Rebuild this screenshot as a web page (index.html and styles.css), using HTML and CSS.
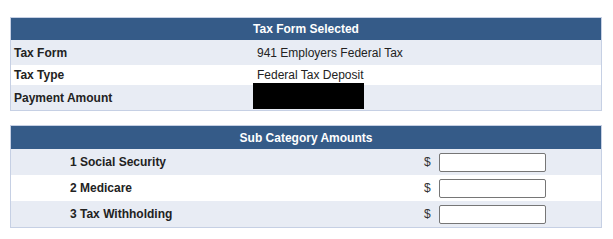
FILE: index.html
```html
<!DOCTYPE html>
<html lang="en">
<head>
    <meta charset="UTF-8">
    <title>Tax Form Selected</title>
    <link rel="stylesheet" href="styles.css">
</head>
<body>
<div class="main">
    <table class="grid summary">
        <colgroup>
            <col class="c-label">
            <col>
        </colgroup>
        <tr class="head">
            <th colspan="2">Tax Form Selected</th>
        </tr>
        <tr class="alt tall">
            <td class="label">Tax Form</td>
            <td class="value">941 Employers Federal Tax</td>
        </tr>
        <tr class="short">
            <td class="label">Tax Type</td>
            <td class="value">Federal Tax Deposit</td>
        </tr>
        <tr class="alt tall">
            <td class="label">Payment Amount</td>
            <td class="value"><div class="redact"></div></td>
        </tr>
    </table>

    <table class="grid amounts">
        <colgroup>
            <col class="c-sub">
            <col class="c-dollar">
            <col>
        </colgroup>
        <tr class="head">
            <th colspan="3">Sub Category Amounts</th>
        </tr>
        <tr class="alt">
            <td class="label sub">1 Social Security</td>
            <td class="dollar">$</td>
            <td class="entry"><input type="text" class="amount"></td>
        </tr>
        <tr>
            <td class="label sub">2 Medicare</td>
            <td class="dollar">$</td>
            <td class="entry"><input type="text" class="amount"></td>
        </tr>
        <tr class="alt">
            <td class="label sub">3 Tax Withholding</td>
            <td class="dollar">$</td>
            <td class="entry"><input type="text" class="amount"></td>
        </tr>
    </table>
</div>
</body>
</html>
```

FILE: styles.css
```css
html, body {
    margin: 0;
    padding: 0;
    background: #fff;
}

.main {
    padding: 17px 0 0 10px;
    font-family: "Liberation Sans", Arial, sans-serif;
    font-size: 12px;
    color: #222;
}

.grid {
    width: 592px;
    border: 1px solid #c6d0e4;
    border-collapse: separate;
    border-spacing: 0;
    table-layout: fixed;
}

.grid td, .grid th {
    padding: 0;
    white-space: nowrap;
}

.c-label { width: 242px; }
.c-sub { width: 410px; }
.c-dollar { width: 14px; }

.head th {
    background-color: #355b88;
    color: #fff;
    font-weight: bold;
    text-align: center;
    height: 22px;
}

.amounts .head th {
    height: 23px;
}

.alt td {
    background-color: #e8ecf4;
}

.summary .tall td {
    height: 25px;
}

.summary .short td {
    height: 20px;
}

.label {
    font-weight: bold;
    padding-left: 3px !important;
}

.value {
    padding-left: 4px !important;
    position: relative;
}

.redact {
    position: absolute;
    left: 0;
    top: -2px;
    width: 111px;
    height: 26px;
    background: #000;
}

.amounts {
    margin-top: 14px;
}

.amounts td {
    height: 26px;
}

.label.sub {
    padding-left: 59px !important;
}

.dollar {
    padding-left: 3px !important;
    color: #333;
}

.entry {
    padding-left: 4px !important;
}

.amount {
    display: block;
    box-sizing: border-box;
    width: 107px;
    height: 19px;
    margin: 0;
    padding: 0 3px;
    border: 1px solid #767676;
    border-radius: 2px;
    background: #fff;
    font-family: inherit;
    font-size: 12px;
}
```
